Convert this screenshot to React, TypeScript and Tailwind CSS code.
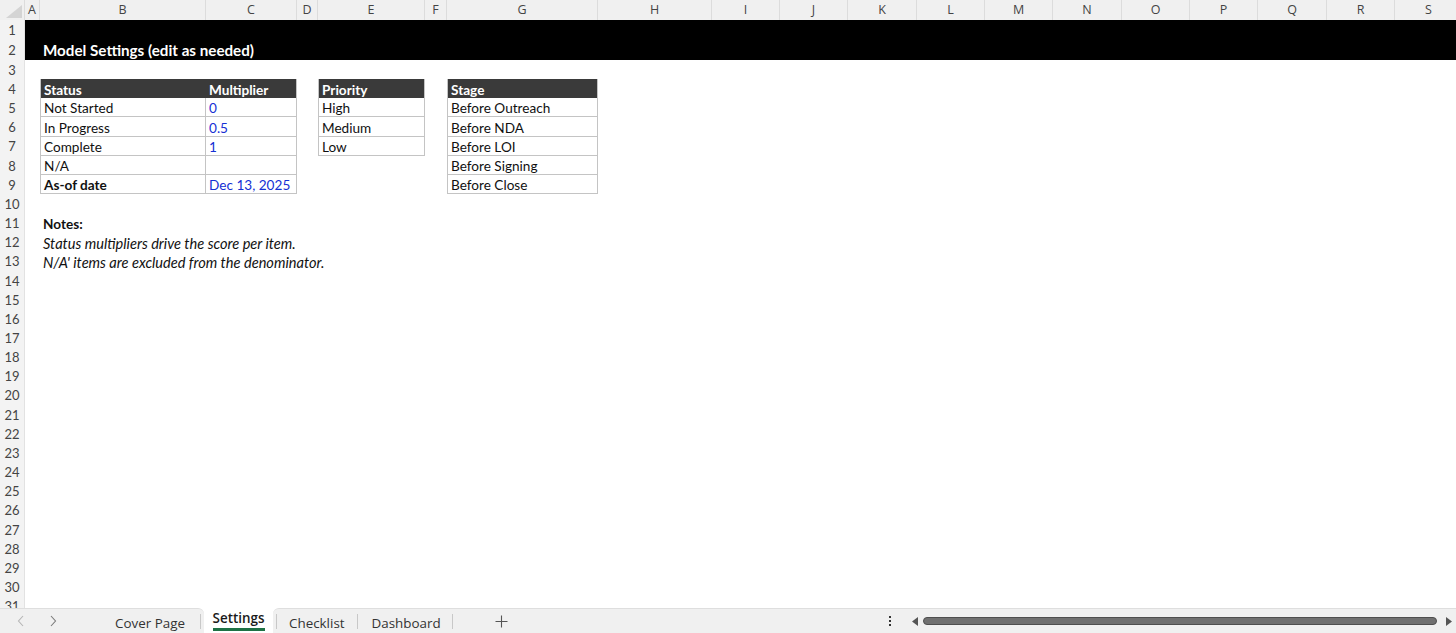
import React from "react";

// column letters and pixel widths (first entry is the row-number gutter)
const COLS = ["A", "B", "C", "D", "E", "F", "G", "H", "I", "J", "K", "L", "M", "N", "O", "P", "Q", "R", "S"];
const WIDTHS = [15, 166, 91, 21, 107, 22, 151, 114, 68, 68, 69, 68, 68, 69, 68, 68, 69, 68, 68];
const ROW_COUNT = 31;

const cellFont = { fontFamily: "Lato, 'Open Sans', sans-serif" };

type Cell = { text?: string; cls?: string };

const HEAD = "bg-[#3a3a3a] text-white font-bold";
const BODY = "border-r border-b border-[#c4c4c4] text-[#111]";
const BODY_L = BODY + " border-l";
const BLUE = BODY + " text-[#1530d4]";
const NOTE = "italic text-[#111] text-[14.6px]";

const cells: Record<string, Cell> = {
  B2: { text: "Model Settings (edit as needed)", cls: "text-white font-bold text-[15.2px] pb-[2px]" },

  B4: { text: "Status", cls: HEAD + " border-l border-[#c4c4c4]" },
  C4: { text: "Multiplier", cls: HEAD + " border-r border-[#c4c4c4]" },
  B5: { text: "Not Started", cls: BODY_L },
  C5: { text: "0", cls: BLUE },
  B6: { text: "In Progress", cls: BODY_L },
  C6: { text: "0.5", cls: BLUE },
  B7: { text: "Complete", cls: BODY_L },
  C7: { text: "1", cls: BLUE },
  B8: { text: "N/A", cls: BODY_L },
  C8: { text: "", cls: BODY },
  B9: { text: "As-of date", cls: BODY_L + " font-bold" },
  C9: { text: "Dec 13, 2025", cls: BLUE },

  E4: { text: "Priority", cls: HEAD + " border-x border-[#c4c4c4]" },
  E5: { text: "High", cls: BODY_L },
  E6: { text: "Medium", cls: BODY_L },
  E7: { text: "Low", cls: BODY_L },

  G4: { text: "Stage", cls: HEAD + " border-x border-[#c4c4c4]" },
  G5: { text: "Before Outreach", cls: BODY_L },
  G6: { text: "Before NDA", cls: BODY_L },
  G7: { text: "Before LOI", cls: BODY_L },
  G8: { text: "Before Signing", cls: BODY_L },
  G9: { text: "Before Close", cls: BODY_L },

  B11: { text: "Notes:", cls: "font-bold text-[#111]" },
  B12: { text: "Status multipliers drive the score per item.", cls: NOTE },
  B13: { text: "N/A' items are excluded from the denominator.", cls: NOTE },
};

function rowHeight(r: number) {
  return r <= 2 ? "h-[20px]" : "h-[19.17px]";
}

function SheetRow({ r }: { r: number }) {
  const banner = r <= 2;
  return (
    <div className={"flex shrink-0 " + rowHeight(r)}>
      <div
        className="w-[25px] shrink-0 flex items-center justify-center pt-[2px] bg-[#f3f3f3] border-r border-[#e2e2e2] text-[13px] text-[#444]"
        style={cellFont}
      >
        {r}
      </div>
      {COLS.map((c, i) => {
        const cell = cells[c + r];
        return (
          <div
            key={c}
            className={
              "shrink-0 flex items-end pl-[3px] whitespace-nowrap text-[13.6px] leading-[16px] " +
              (banner ? "bg-black " : "") +
              (cell?.cls ?? "")
            }
            style={{ width: WIDTHS[i], ...cellFont }}
          >
            {cell?.text ? <span className="relative z-10">{cell.text}</span> : null}
          </div>
        );
      })}
    </div>
  );
}

function ColumnHeader() {
  return (
    <div className="flex h-[20px] shrink-0 bg-[#f0f0f0]">
      <div className="w-[25px] shrink-0 relative border-r border-[#dcdcdc]">
        <svg className="absolute left-[6px] top-[5px]" width="16" height="13" viewBox="0 0 16 13">
          <polygon points="16,0 16,13 0,13" fill="#d4d4d4" />
        </svg>
      </div>
      {COLS.map((c, i) => (
        <div
          key={c}
          className="shrink-0 flex items-center justify-center border-r border-[#dcdcdc] text-[12.5px] text-[#444]"
          style={{ width: WIDTHS[i], fontFamily: "'Open Sans', sans-serif" }}
        >
          {c}
        </div>
      ))}
    </div>
  );
}

function Sep() {
  return <div className="w-px h-[15px] bg-[#c8c8c8]" />;
}

function TabBar() {
  const tabFont = { fontFamily: "'Open Sans', sans-serif" };
  return (
    <div className="h-[25px] shrink-0 flex bg-white text-[13.4px] text-[#333]" style={tabFont}>
      <div className="w-[204px] flex items-center bg-[#f0f0f0] border-t border-[#dedede] rounded-tr-[6px]">
        <span className="w-[14px] ml-[17px] text-[#b5b5b5]">
          <svg width="8" height="12" viewBox="0 0 8 12"><path d="M6 1 L1.5 6 L6 11" fill="none" stroke="currentColor" strokeWidth="1.1" /></svg>
        </span>
        <span className="w-[14px] ml-[18px] text-[#7a7a7a]">
          <svg width="8" height="12" viewBox="0 0 8 12"><path d="M2 1 L6.5 6 L2 11" fill="none" stroke="currentColor" strokeWidth="1.1" /></svg>
        </span>
        <span className="ml-[52px] pt-[5px]">Cover Page</span>
        <span className="ml-auto mr-[3px]"><Sep /></span>
      </div>
      <div className="w-[69px] flex flex-col items-center justify-end">
        <span className="font-semibold text-[#1a1a1a] leading-[18px]">Settings</span>
        <div className="w-[52px] h-[3px] bg-[#1e7145] mt-[1px] mb-[2px]" />
      </div>
      <div className="flex-1 flex items-center bg-[#f0f0f0] border-t border-[#dedede] rounded-tl-[6px]">
        <span className="ml-[3px]"><Sep /></span>
        <span className="ml-[12px] pt-[5px]">Checklist</span>
        <span className="ml-[12px]"><Sep /></span>
        <span className="ml-[14px] pt-[5px]">Dashboard</span>
        <span className="ml-[11px]"><Sep /></span>
        <span className="ml-[42px] text-[#555]">
          <svg width="13" height="13" viewBox="0 0 13 13"><path d="M6.5 0.5 V12.5 M0.5 6.5 H12.5" stroke="currentColor" strokeWidth="1.1" /></svg>
        </span>
        <span className="ml-[381px] flex flex-col gap-[2px]">
          <span className="w-[2px] h-[2px] bg-[#333]" />
          <span className="w-[2px] h-[2px] bg-[#333]" />
          <span className="w-[2px] h-[2px] bg-[#333]" />
        </span>
        <span className="ml-[21px] text-[#555]">
          <svg width="6" height="9" viewBox="0 0 6 9"><polygon points="6,0 6,9 0,4.5" fill="currentColor" /></svg>
        </span>
        <div className="ml-[5px] w-[514px] h-[8px] rounded-full bg-[#707070] border border-[#4e4e4e]" />
        <span className="ml-[9px] text-[#555]">
          <svg width="6" height="9" viewBox="0 0 6 9"><polygon points="0,0 0,9 6,4.5" fill="currentColor" /></svg>
        </span>
      </div>
    </div>
  );
}

export default function App() {
  return (
    <div className="w-[1456px] h-[633px] flex flex-col overflow-hidden bg-white">
      <ColumnHeader />
      <div className="flex-1 flex flex-col overflow-hidden">
        {Array.from({ length: ROW_COUNT }, (_, i) => (
          <SheetRow key={i} r={i + 1} />
        ))}
      </div>
      <TabBar />
    </div>
  );
}
